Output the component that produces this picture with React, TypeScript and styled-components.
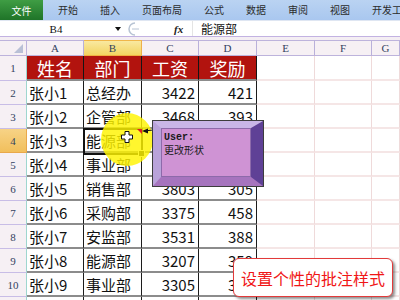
import React from "react";
import styled, { createGlobalStyle } from "styled-components";

const Global = createGlobalStyle`
  html, body { margin: 0; padding: 0; width: 400px; height: 300px; overflow: hidden; background: #fff; }
  body { font-family: "Noto Sans CJK SC", "Noto Sans", sans-serif; }
  * { box-sizing: border-box; }
`;

const Page = styled.div`
  position: relative;
  width: 400px;
  height: 300px;
  overflow: hidden;
  background: #fff;
`;

const TabBar = styled.div`
  display: flex;
  height: 20px;
  overflow: hidden;
  background: linear-gradient(#bad3f2, #a9c7ef);
  font-size: 10px;
  color: #2b2b2b;
`;

const FileTab = styled.div`
  flex-shrink: 0;
  width: 43px;
  display: flex;
  align-items: center;
  justify-content: center;
  color: #fff;
  background: linear-gradient(#3f9d44, #1f7428);
`;

const Tabs = styled.div`
  flex-shrink: 0;
  display: flex;
  align-items: center;
  gap: 22px;
  margin-left: 15px;
  white-space: nowrap;
`;

const Tab = styled.span`
  line-height: 20px;
`;

const FormulaBar = styled.div`
  display: flex;
  align-items: center;
  height: 17px;
  background: #fff;
  border-top: 1px solid #dfe6f2;
  border-bottom: 1px solid #c2b2e2;
`;

const NameBox = styled.div`
  width: 112px;
  text-align: center;
  font-family: "Liberation Serif", serif;
  font-size: 11px;
  color: #111;
`;

const Caret = styled.div`
  width: 12px;
  display: flex;
  justify-content: center;
`;

const Splitter = styled.div`
  width: 20px;
  display: flex;
  justify-content: center;
`;

const Fx = styled.div`
  margin-left: 30px;
  width: 18px;
  font-family: "Liberation Serif", serif;
  font-style: italic;
  font-weight: bold;
  font-size: 11px;
  color: #222;
`;

const FormulaInput = styled.div`
  flex: 1;
  height: 100%;
  border-left: 1px solid #e4e4e4;
  padding-left: 8px;
  font-size: 12px;
  line-height: 16px;
  color: #111;
`;

const Gap = styled.div`
  height: 3px;
  background: #f4eef3;
`;

const Sheet = styled.div`
  display: grid;
  grid-template-columns: 27px 57px 58px 57px 58px 58px 57px 28px;
  grid-template-rows: 16px 25px repeat(10, 24px);
`;

const Corner = styled.div`
  position: relative;
  background: #f6f0f4;
  border-top: 1px solid #bdb3dc;
  border-right: 1px solid #bdb3dc;
  border-bottom: 1px solid #bdb3dc;
  &::after {
    content: "";
    position: absolute;
    right: 3px;
    bottom: 2px;
    border-left: 9px solid transparent;
    border-bottom: 9px solid #b9c0d6;
  }
`;

const ColHead = styled.div<{ $sel?: boolean }>`
  display: flex;
  align-items: center;
  justify-content: center;
  font-family: "Liberation Serif", serif;
  font-size: 11px;
  color: #33425f;
  background: ${(p) => (p.$sel ? "linear-gradient(#f9e9a0, #f3d462)" : "#f6f0f4")};
  border-top: 1px solid ${(p) => (p.$sel ? "#f0b64a" : "#bdb3dc")};
  border-right: 1px solid ${(p) => (p.$sel ? "#eeb04a" : "#b9b0da")};
  border-bottom: 1px solid ${(p) => (p.$sel ? "#f0b040" : "#bdb3dc")};
`;

const RowHead = styled.div<{ $sel?: boolean }>`
  display: flex;
  align-items: center;
  justify-content: center;
  font-family: "Liberation Serif", serif;
  font-size: 11px;
  color: #33425f;
  background: ${(p) => (p.$sel ? "linear-gradient(#f7d386, #f1bf5c)" : "#f6f0f4")};
  border-right: 1px solid ${(p) => (p.$sel ? "#e9a84a" : "#9fd6cf")};
  border-bottom: 1px solid ${(p) => (p.$sel ? "#e9a84a" : "#c8bde6")};
`;

const TitleCell = styled.div`
  display: flex;
  align-items: center;
  justify-content: center;
  background: #b2130e;
  color: #fff;
  font-size: 18px;
  border-right: 1px solid #151515;
  border-bottom: 2px solid #8c8c8c;
`;

const DataCell = styled.div<{ $num?: boolean }>`
  display: flex;
  align-items: center;
  justify-content: ${(p) => (p.$num ? "flex-end" : "flex-start")};
  padding: 0 ${(p) => (p.$num ? "3px" : "2px")};
  font-size: 15px;
  color: #111;
  border-right: 1px solid #1c1c1c;
  border-bottom: 2px solid #8c8c8c;
  white-space: nowrap;
  overflow: hidden;
`;

const EmptyCell = styled.div`
  border-right: 1px solid #efdada;
  border-bottom: 2px solid #f5e6e6;
`;

const Selection = styled.div`
  position: absolute;
  left: 83px;
  top: 128px;
  width: 60px;
  height: 27px;
  border: 2px solid #111;
  &::after {
    content: "";
    position: absolute;
    right: -4px;
    bottom: -4px;
    width: 5px;
    height: 5px;
    background: #111;
    border: 1px solid #fff;
  }
`;

const Spot = styled.div`
  position: absolute;
  left: 101px;
  top: 113px;
  width: 52px;
  height: 53px;
  border-radius: 50%;
  background: rgba(255, 244, 0, 0.82);
`;

const Overlay = styled.svg`
  position: absolute;
  overflow: visible;
`;

const Comment = styled.div`
  position: absolute;
  left: 153px;
  top: 121px;
  width: 110px;
  height: 65px;
  border-style: solid;
  border-width: 7px 12px 9px 8px;
  border-color: #c9b6e7 #5f4196 #a674be #b9a3da;
  box-shadow: 0 0 0 1px #3d3d3d;
`;

const Face = styled.div`
  height: 100%;
  background: #cf93d4;
  border: 1px solid #8d6aaa;
  padding: 3px 2px;
`;

const Author = styled.div`
  font-family: "Liberation Mono", monospace;
  font-weight: bold;
  font-size: 10px;
  line-height: 11px;
  color: #1a1a1a;
`;

const Note = styled.div`
  font-size: 10px;
  line-height: 14px;
  color: #1a1a1a;
`;

const Callout = styled.div`
  position: absolute;
  left: 233px;
  top: 258px;
  width: 160px;
  height: 39px;
  display: flex;
  align-items: center;
  justify-content: center;
  background: #fff;
  border: 1px solid #e23a3a;
  border-radius: 6px;
  box-shadow: 2px 2px 3px rgba(0, 0, 0, 0.45);
  color: #f01616;
  font-size: 16px;
  white-space: nowrap;
`;

const tabs = ["开始", "插入", "页面布局", "公式", "数据", "审阅", "视图", "开发工具"];
const cols = ["A", "B", "C", "D", "E", "F", "G"];
const rows: string[][] = [
  ["张小1", "总经办", "3422", "421"],
  ["张小2", "企管部", "3468", "393"],
  ["张小3", "能源部", "3356", "412"],
  ["张小4", "事业部", "3290", "376"],
  ["张小5", "销售部", "3803", "305"],
  ["张小6", "采购部", "3375", "458"],
  ["张小7", "安监部", "3531", "388"],
  ["张小8", "能源部", "3207", "359"],
  ["张小9", "事业部", "3305", "318"],
  ["", "", "", ""],
];

export default function App() {
  return (
    <Page>
      <Global />
      <TabBar>
        <FileTab>文件</FileTab>
        <Tabs>
          {tabs.map((t) => (
            <Tab key={t}>{t}</Tab>
          ))}
        </Tabs>
      </TabBar>
      <FormulaBar>
        <NameBox>B4</NameBox>
        <Caret>
          <svg width="6" height="4" viewBox="0 0 6 4">
            <polygon points="0,0 6,0 3,4" fill="#111" />
          </svg>
        </Caret>
        <Splitter>
          <svg width="12" height="14" viewBox="0 0 12 14">
            <path d="M7 1 A6 6 0 0 0 7 13" fill="none" stroke="#b8c4d4" strokeWidth="1.5" />
            <line x1="4" y1="7" x2="11" y2="7" stroke="#b8c4d4" strokeWidth="1" />
          </svg>
        </Splitter>
        <Fx>fx</Fx>
        <FormulaInput>能源部</FormulaInput>
      </FormulaBar>
      <Gap />
      <Sheet>
        <Corner />
        {cols.map((c) => (
          <ColHead key={c} $sel={c === "B"}>
            {c}
          </ColHead>
        ))}
        <RowHead>1</RowHead>
        {["姓名", "部门", "工资", "奖励"].map((h) => (
          <TitleCell key={h}>{h}</TitleCell>
        ))}
        <EmptyCell />
        <EmptyCell />
        <EmptyCell />
        {rows.map((r, i) => (
          <React.Fragment key={i}>
            <RowHead $sel={i === 2}>{i + 2}</RowHead>
            <DataCell>{r[0]}</DataCell>
            <DataCell>{r[1]}</DataCell>
            <DataCell $num>{r[2]}</DataCell>
            <DataCell $num>{r[3]}</DataCell>
            <EmptyCell />
            <EmptyCell />
            <EmptyCell />
          </React.Fragment>
        ))}
      </Sheet>

      <Selection />
      <Spot />
      <Overlay style={{ left: 136, top: 126 }} width="20" height="12" viewBox="0 0 20 12">
        <polygon points="1,3 6,3 6,8" fill="#e02020" />
        <line x1="17" y1="4" x2="8" y2="5" stroke="#111" strokeWidth="1" />
        <polygon points="6,5 12,2.5 12,7.5" fill="#111" />
      </Overlay>
      <Overlay style={{ left: 121, top: 131 }} width="12" height="12" viewBox="0 0 12 12">
        <path
          d="M4 0.5 H8 V4 H11.5 V8 H8 V11.5 H4 V8 H0.5 V4 H4 Z"
          fill="#fff"
          stroke="#111"
          strokeWidth="1"
        />
      </Overlay>
      <Comment>
        <Face>
          <Author>User:</Author>
          <Note>更改形状</Note>
        </Face>
      </Comment>
      <Callout>设置个性的批注样式</Callout>
    </Page>
  );
}
